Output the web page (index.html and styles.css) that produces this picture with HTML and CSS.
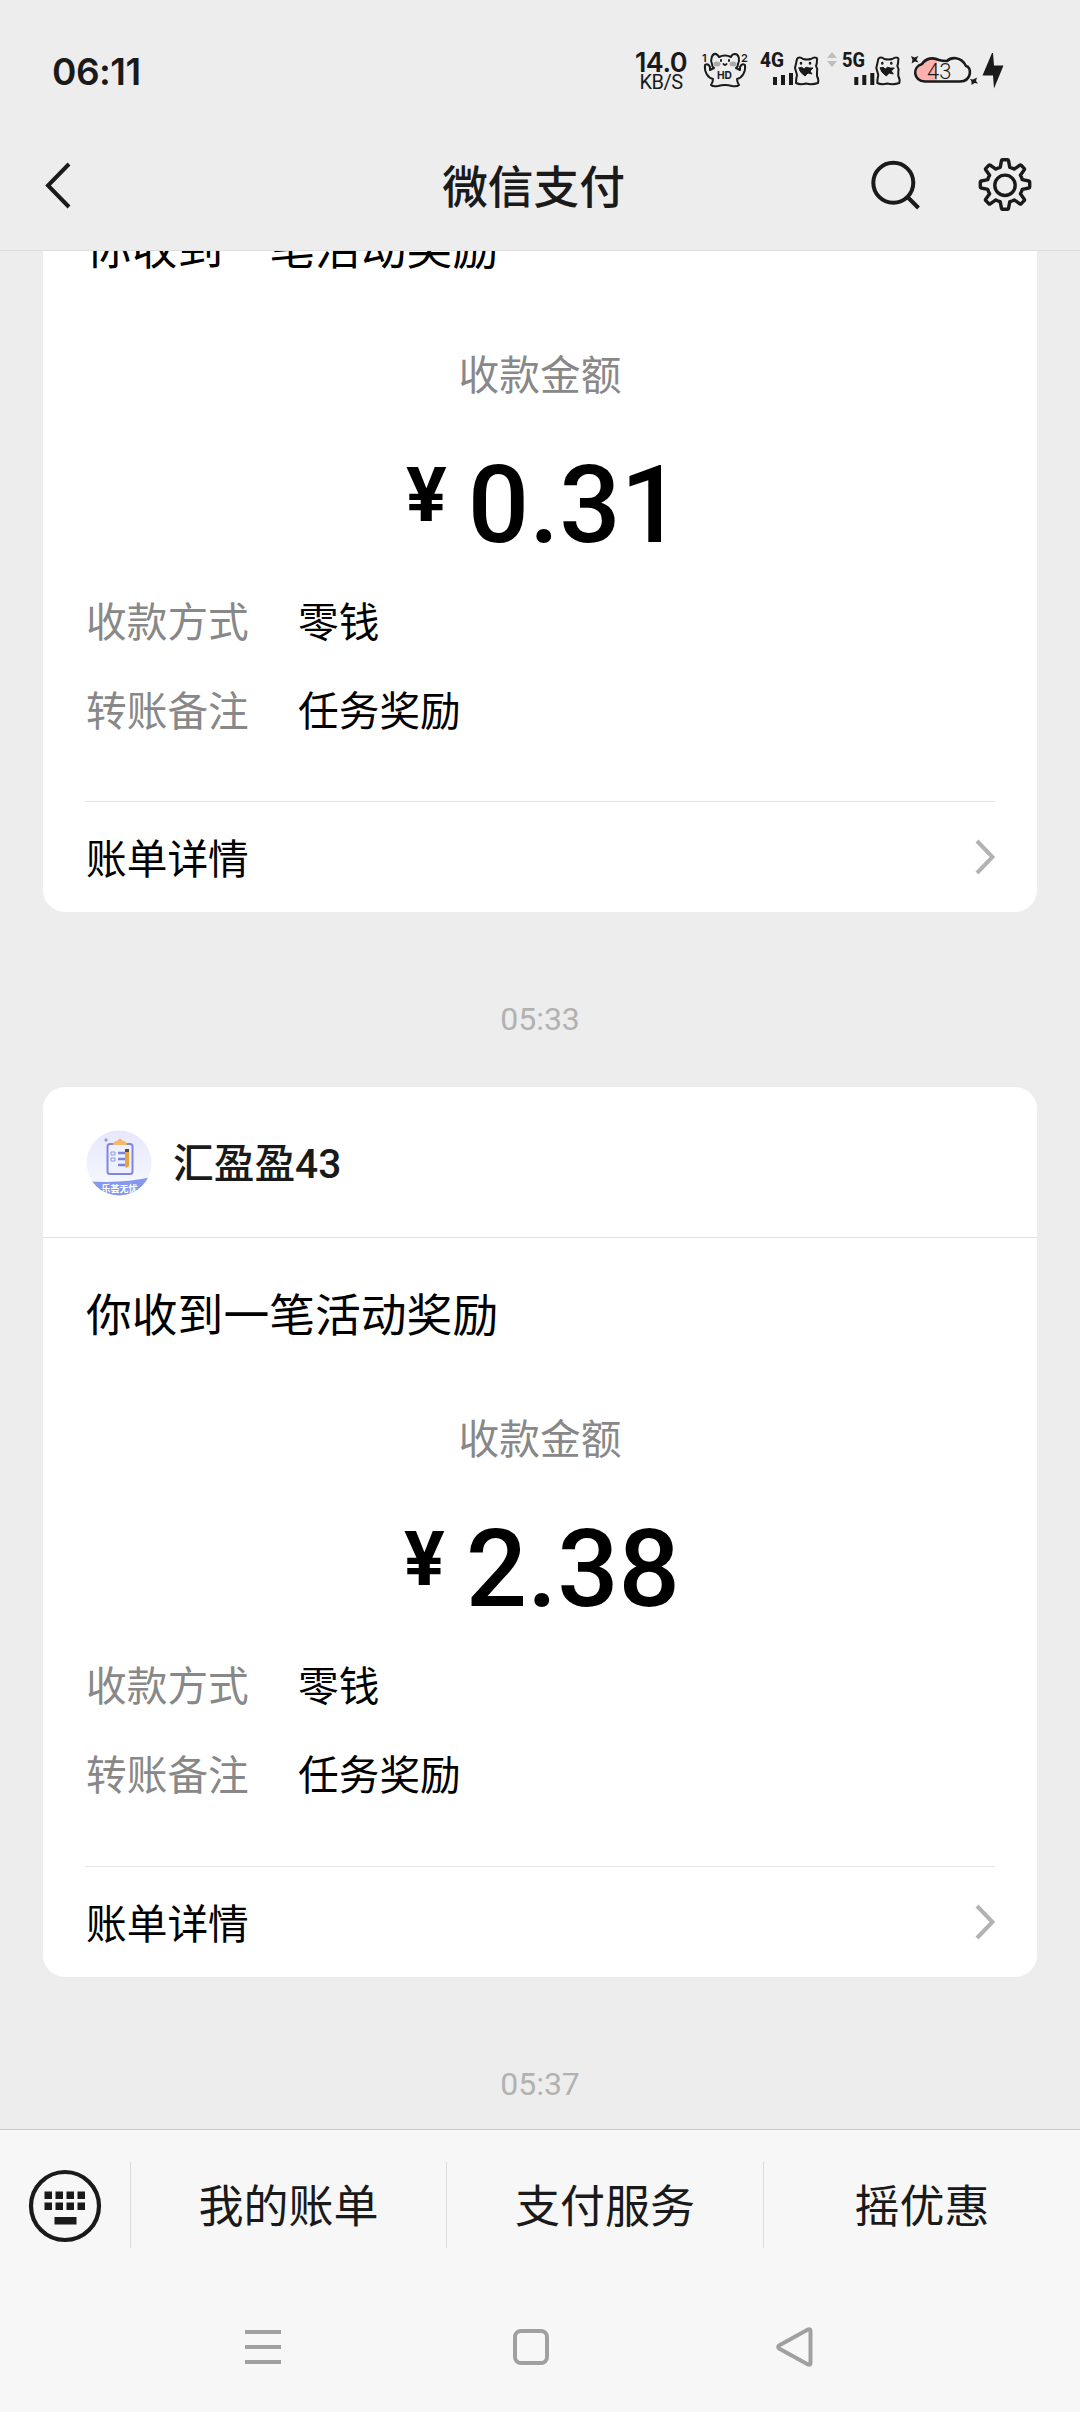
FILE: index.html
```html
<!DOCTYPE html>
<html lang="zh-CN">
<head>
<meta charset="utf-8">
<title>微信支付</title>
<link rel="stylesheet" href="styles.css">
</head>
<body>
<div class="screen">
  <header class="top">
    <div class="status">
      <span class="clock">06:11</span>
      <div class="speed"><span class="speed-num">14.0</span><span class="speed-unit">KB/S</span></div>
      <svg class="status-icons" width="320" height="50" viewBox="695 45 320 50" fill="none" stroke="#1a1a1a" stroke-width="2" stroke-linecap="round" stroke-linejoin="round">
        <g class="cat">
          <path d="M712 64 C710 60 712 53 716 54 Q718 55 719 57 Q725 54 731 57 Q732 54 735 54 C739 54 740 60 738 64 Q738 67 736 68 M712 64 Q712 67 714 68 L710 70 L710 67 Q708 63 705 65 C704 72 708 78 713 79 Q713 82 711 85 Q713 87 718 86 Q725 84 732 86 Q737 87 739 85 Q737 82 737 79 C742 78 746 72 745 65 Q742 63 740 67 L740 70 L736 68"/>
          <path d="M721 60v1M729 60v1M723.500 64q1.500 2 3 0"/>
          <ellipse cx="717" cy="64" rx="3.500" ry="2.500" fill="#aaa" stroke="none"/><ellipse cx="733" cy="64" rx="3.500" ry="2.500" fill="#aaa" stroke="none"/>
        </g>
        <text class="tiny" x="702" y="62">1</text><text class="tiny" x="741" y="62">2</text>
        <text class="hd" x="717" y="79" textLength="15" lengthAdjust="spacingAndGlyphs">HD</text>
        <text class="net" x="760" y="67" textLength="24" lengthAdjust="spacingAndGlyphs">4G</text>
        <text class="net" x="842" y="67" textLength="23" lengthAdjust="spacingAndGlyphs">5G</text>
        <g id="sim">
          <path d="M773 77h4v8h-4zM781 75h4v10h-4zM789 73h4v12h-4z" fill="#1a1a1a" stroke="none"/>
          <path d="M797 59 C798 57 801 57 803 59 Q807 60 811 59 C814 57 818 57 817 60 Q817 64 816 66 Q818 69 817 72 L817 76 Q819 80 818 83 Q812 85 806 83.500 Q800 85 796 83 Q796 79 797 75 L795 68 Q796 64 797 59Z"/>
          <path d="M801 63v.5M810 63v.5" stroke-width="2.500"/>
          <path d="M799 68q3-2 5 1q2-3 5-1l4 0-3 3 2 3-4-1-3 3q-6-4-6-8z" fill="#1a1a1a" stroke-width="1"/>
        </g>
        <use href="#sim" x="81.300"/>
        <path d="M832 52l5 6h-10zM832 67l5-6h-10z" fill="#bdbdbd" stroke="none"/>
        <path d="M937 60 Q928 57 922 64 C913 67 914 81 925 81 L937 81Z" fill="#ffb1ae" stroke="none"/>
        <path d="M925 81.500 H960 C972 81 972 67 966 66 C961 56 951 57 947 61 Q942 61 939 60 C933 57 926 58 922 64 C912 67 913 81 925 81.500Z" stroke-width="2.600"/>
        <text class="battery" x="927" y="79">43</text>
        <path d="M911 56l3.500 1.500 4-1.500-2 3.500 2 3-3.500-1-3.500 2 1-3.500zM970 79l3 .5 4-2-1 3.500 2 2.500-3.500-.5-3 2 0-3.500z" fill="#1a1a1a" stroke="none"/>
        <path d="M992 53L982.500 75.500h10.500l1 13 9.500-23h-9.500L993 53z" fill="#1a1a1a" stroke="none"/>
      </svg>
    </div>
    <div class="titlebar">
      <svg class="back" width="30" height="50" viewBox="43 160 30 50" fill="none" stroke="#1a1a1a" stroke-width="4"><path d="M69 164L48 185.500L69 207"/></svg>
      <h1 class="title">微信支付</h1>
      <svg class="actions" width="180" height="70" viewBox="860 150 180 70" fill="none" stroke="#1a1a1a" stroke-width="4">
        <circle cx="893.300" cy="182.700" r="20"/><path d="M907.500 197L918.500 208"/>
        <circle cx="1005" cy="185.300" r="10.200" stroke-width="3.400"/>
        <path stroke-width="3.400" stroke-linejoin="round" d="M1002.500 159.800h5q.8 0 1 .9l1.300 6.600q2.600.6 4.400 1.800l5.600-3.900q.7-.5 1.300.1l3.100 3.100q.6.600.1 1.300l-3.900 5.600q1.300 2 1.800 4.400l6.600 1.300q.9.200.9 1v5q0 .8-.9 1l-6.600 1.300q-.5 2.400-1.800 4.400l3.900 5.600q.5.700-.1 1.300l-3.100 3.100q-.6.600-1.300.1l-5.600-3.900q-1.900 1.200-4.400 1.800l-1.300 6.600q-.2.900-1 .9h-5q-.8 0-1-.9l-1.300-6.600q-2.500-.6-4.400-1.800l-5.600 3.900q-.7.500-1.300-.1l-3.100-3.100q-.6-.6-.1-1.300l3.900-5.600q-1.300-2-1.800-4.400l-6.600-1.300q-.9-.2-.9-1v-5q0-.8.9-1l6.600-1.300q.5-2.400 1.800-4.400l-3.900-5.600q-.5-.7.1-1.300l3.100-3.100q.6-.6 1.300-.1l5.600 3.900q1.900-1.200 4.400-1.800l1.300-6.600q.2-.9 1-.9z"/>
      </svg>
    </div>
  </header>

  <main class="feed">
    <article class="card clipped">
      <p class="headline">你收到一笔活动奖励</p>
      <p class="caption">收款金额</p>
      <p class="amount"><span class="yen">¥</span><span class="num">0.31</span></p>
      <dl class="rows">
        <div class="row"><dt>收款方式</dt><dd>零钱</dd></div>
        <div class="row"><dt>转账备注</dt><dd>任务奖励</dd></div>
      </dl>
      <div class="detail"><span>账单详情</span><svg width="20" height="38" viewBox="0 0 20 38" fill="none" stroke="#b2b2b2" stroke-width="4"><path d="M2 3L17.500 19L2 35"/></svg></div>
    </article>
    <time class="time">05:33</time>
    <article class="card">
      <div class="sender">
        <svg class="avatar" width="66" height="66" viewBox="0 0 66 66">
          <defs>
            <clipPath id="round"><circle cx="33" cy="33" r="32.500"/></clipPath>
            <linearGradient id="sky" x1="0" y1="0" x2="0" y2="1"><stop offset="0" stop-color="#e6e7fc"/><stop offset="1" stop-color="#fafaff"/></linearGradient>
          </defs>
          <g clip-path="url(#round)">
            <rect width="66" height="66" fill="url(#sky)"/>
            <path d="M0 51Q34 54 66 47V66H0Z" fill="#8798ec"/>
            <path d="M18 10l2-2 2 2-2 2z" fill="#8f94e4"/>
            <rect x="21.500" y="14" width="25" height="30" rx="2.500" fill="#eef0fb" stroke="#8085e0" stroke-width="2"/>
            <path d="M27 15q0-4 4-4 3-5 6 0 4 0 4 4z" fill="#f5b868"/>
            <path d="M25 22h4v3h-4zM25 28h4v3h-4z" fill="none" stroke="#8f94e4"/>
            <path d="M32 23h7M32 29h7M32 35h7" stroke="#7c82df" stroke-width="2.500"/>
            <path d="M39 22h4v14l-3 2-1-2z" fill="#eaa23c"/><path d="M39 19h4v3h-4z" fill="#514a56"/>
            <text class="badge" x="15.500" y="61.500">乐荟无忧</text>
          </g>
        </svg>
        <span class="name">汇盈盈43</span>
      </div>
      <p class="headline">你收到一笔活动奖励</p>
      <p class="caption">收款金额</p>
      <p class="amount"><span class="yen">¥</span><span class="num">2.38</span></p>
      <dl class="rows">
        <div class="row"><dt>收款方式</dt><dd>零钱</dd></div>
        <div class="row"><dt>转账备注</dt><dd>任务奖励</dd></div>
      </dl>
      <div class="detail"><span>账单详情</span><svg width="20" height="38" viewBox="0 0 20 38" fill="none" stroke="#b2b2b2" stroke-width="4"><path d="M2 3L17.500 19L2 35"/></svg></div>
    </article>
    <time class="time">05:37</time>
  </main>

  <footer class="bottom">
    <nav class="menu">
      <div class="keyboard">
        <svg width="74" height="74" viewBox="0 0 74 74"><circle cx="37" cy="37" r="34" fill="none" stroke="#1a1a1a" stroke-width="4.200"/><path fill="#1a1a1a" d="M16.500 22.500h7.500v7.500h-7.500zM27.500 22.500h7.500v7.500h-7.500zM38.500 22.500h7.500v7.500h-7.500zM49.500 22.500h7.500v7.500h-7.500zM16.500 33.500h7.500v7.500h-7.500zM27.500 33.500h7.500v7.500h-7.500zM38.500 33.500h7.500v7.500h-7.500zM49.500 33.500h7.500v7.500h-7.500zM26.500 48h22v7.500h-22z"/></svg>
      </div>
      <span class="item">我的账单</span>
      <span class="item">支付服务</span>
      <span class="item">摇优惠</span>
    </nav>
    <div class="system">
      <svg width="36" height="40" viewBox="0 0 36 40" stroke="#a0a0a0" stroke-width="4"><path d="M0 5h36M0 20h36M0 35h36"/></svg>
      <svg width="36" height="40" viewBox="0 0 36 40" fill="none" stroke="#a0a0a0" stroke-width="4"><rect x="2" y="4" width="32" height="32" rx="6"/></svg>
      <svg width="37" height="40" viewBox="0 0 37 40" fill="none" stroke="#a0a0a0" stroke-width="4" stroke-linejoin="round"><path d="M3 18.500L32 2.500Q34.500 1.500 34.500 4V36Q34.500 38.500 32 37.500L3 21.500Q1.500 20 3 18.500Z"/></svg>
    </div>
  </footer>
</div>
</body>
</html>
```
FILE: styles.css
```css
* { box-sizing: border-box; margin: 0; padding: 0; }
body {
  width: 1080px;
  height: 2412px;
  overflow: hidden;
  background: #ededed;
  color: #000;
  font-family: Roboto, "Noto Sans CJK SC", sans-serif;
}
.screen { display: flex; flex-direction: column; height: 2412px; }

.top {
  flex: none;
  height: 251px;
  background: #ededed;
  border-bottom: 1px solid #dedede;
  color: #1a1a1a;
}
.status { display: flex; height: 120px; padding: 45px 0 0 52px; }
.clock {
  width: 581px;
  font: 600 37px/54px Inter, sans-serif;
  letter-spacing: -.5px;
}
.speed { display: flex; flex-direction: column; align-items: center; width: 56px; padding-top: 4px; }
.speed-num { font: 600 27px/24px Inter, sans-serif; letter-spacing: -.5px; padding-top: 2px; }
.speed-unit { margin-top: -1px; font: 400 20px/17px Roboto, sans-serif; letter-spacing: -.5px; }
.status-icons { flex: none; margin-left: 6px; }
.status-icons text { fill: #1a1a1a; stroke: none; }
.tiny { font: 600 11px Inter, sans-serif; }
.hd { font: 700 11px Inter, sans-serif; }
.net { font: 800 21px Roboto, sans-serif; }
.battery { font: 300 22px Roboto, sans-serif; }

.titlebar { display: flex; align-items: center; height: 130px; padding: 0 40px 0 43px; }
.back { flex: none; }
.title {
  flex: 1;
  padding: 8px 0 0 134px;
  text-align: center;
  font-size: 45.7px;
  font-weight: 500;
  line-height: 66px;
}
.actions { flex: none; }

.feed { display: flex; flex-direction: column; flex: 1; min-height: 0; overflow: hidden; }
.card {
  flex: none;
  display: flex;
  flex-direction: column;
  height: 890px;
  margin: 0 43px;
  border-radius: 22px;
  background: #fff;
}
.card.clipped { height: 661px; border-radius: 0 0 22px 22px; }
.sender {
  display: flex;
  align-items: center;
  gap: 21px;
  height: 151px;
  padding: 1px 0 0 43px;
  border-bottom: 1px solid #e3e3e3;
}
.name { margin-top: -4px; color: #1a1a1a; font-size: 40.7px; font-weight: 500; }
.badge { font: 700 9px "Noto Sans CJK SC", sans-serif; fill: #fff; }
.headline { padding: 46px 43px 0; font-size: 45.8px; line-height: 66px; }
.caption {
  margin-top: 60px;
  color: #888;
  font-size: 40.7px;
  line-height: 60px;
  text-align: center;
}
.clipped .headline { margin-top: -34px; padding-top: 0; }
.clipped .caption { margin-top: 63px; }
.amount {
  display: flex;
  justify-content: center;
  gap: 21px;
  height: 188px;
  margin-top: 20px;
  padding-left: 4px;
  font-weight: 500;
}
.clipped .amount { padding-left: 8px; }
.yen { font-size: 76px; font-weight: 700; line-height: 138px; }
.num { font-size: 108px; line-height: 158px; }
.rows { color: #000; font-size: 40.7px; margin-top: -21px; }
.row { display: flex; height: 88.500px; padding-left: 43px; line-height: 60px; }
.row dt { width: 212px; color: #888; }
.detail {
  display: flex;
  align-items: center;
  justify-content: space-between;
  height: 111px;
  margin: auto 42px 0;
  border-top: 1px solid #e5e5e5;
  font-size: 40.7px;
}
.detail span { padding: 0 0 1px 1px; }
.time {
  flex: none;
  height: 175px;
  padding-top: 1px;
  color: #b2b2b2;
  font-size: 32px;
  line-height: 213px;
  text-align: center;
}

.bottom { flex: none; height: 283px; border-top: 1px solid #c9c9c9; background: #f7f7f7; }
.menu {
  display: grid;
  grid-template-columns: 130px 316px 317px 317px;
  align-items: center;
  height: 86px;
  margin-top: 32px;
  color: #1a1a1a;
  font-size: 45px;
}
.keyboard { display: flex; padding: 2px 0 0 28px; }
.item { height: 86px; border-left: 1px solid #dcdcdc; line-height: 92px; text-align: center; }
.system { display: flex; gap: 232px; margin-top: 79px; padding-left: 245px; }
.system svg:last-child { margin-left: -5px; }
```
